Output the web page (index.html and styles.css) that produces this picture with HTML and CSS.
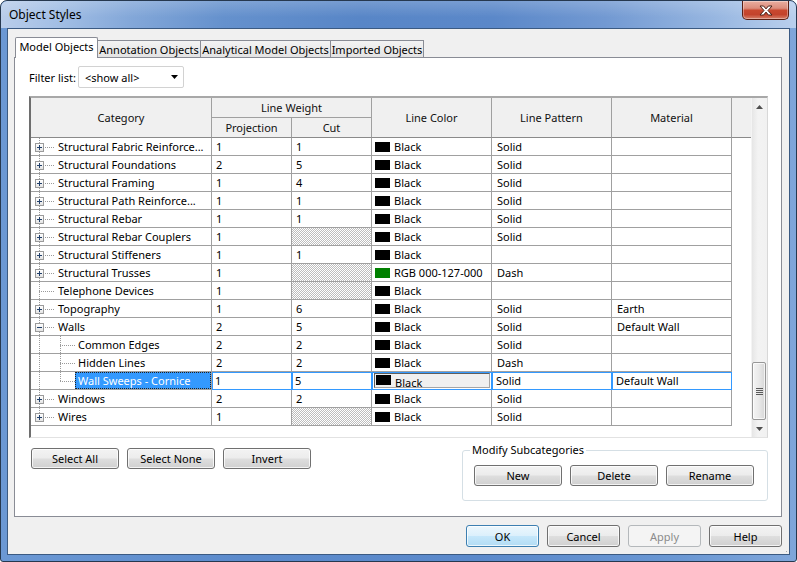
FILE: index.html
```html
<!DOCTYPE html>
<html>
<head>
<meta charset="utf-8">
<title>Object Styles</title>
<link rel="stylesheet" href="styles.css">
</head>
<body>
<div class="window">
  <div class="titlebar">
    <span class="title">Object Styles</span>
    <div class="close">
      <svg width="14" height="11" viewBox="0 0 14 11"><path d="M1 1h3.6L7 3.9 9.4 1H13L9 5.5 13 10H9.4L7 7.1 4.6 10H1l4-4.5z" fill="#fff" stroke="#4a2219" stroke-width="1" stroke-linejoin="round"/></svg>
    </div>
  </div>
  <div class="client">
    <div class="tabs">
      <div class="tab active t1">Model Objects</div>
      <div class="tab t2">Annotation Objects</div>
      <div class="tab t3">Analytical Model Objects</div>
      <div class="tab t4">Imported Objects</div>
    </div>
    <div class="panel">
      <div class="filter">
        <span class="flabel">Filter list:</span>
        <div class="combo"><span>&lt;show all&gt;</span><svg width="7" height="4" viewBox="0 0 7 4"><path d="M0 0h7L3.5 4z" fill="#000"/></svg></div>
      </div>
      <div class="gridwrap">
        <div class="grid">
          <div class="h h-cat">Category</div>
          <div class="h h-lw">Line Weight</div>
          <div class="h h-color">Line Color</div>
          <div class="h h-pat">Line Pattern</div>
          <div class="h h-mat">Material</div>
          <div class="h h-x"></div>
          <div class="h h-proj">Projection</div>
          <div class="h h-cut">Cut</div>

          <div class="c cat"><span class="node"><span class="box plus"></span></span><span class="name">Structural Fabric Reinforce...</span></div>
          <div class="c">1</div><div class="c">1</div>
          <div class="c clr"><span class="sw"></span>Black</div><div class="c pat">Solid</div><div class="c pat"></div><div class="x"></div>

          <div class="c cat"><span class="node"><span class="box plus"></span></span><span class="name">Structural Foundations</span></div>
          <div class="c">2</div><div class="c">5</div>
          <div class="c clr"><span class="sw"></span>Black</div><div class="c pat">Solid</div><div class="c pat"></div><div class="x"></div>

          <div class="c cat"><span class="node"><span class="box plus"></span></span><span class="name">Structural Framing</span></div>
          <div class="c">1</div><div class="c">4</div>
          <div class="c clr"><span class="sw"></span>Black</div><div class="c pat">Solid</div><div class="c pat"></div><div class="x"></div>

          <div class="c cat"><span class="node"><span class="box plus"></span></span><span class="name">Structural Path Reinforce...</span></div>
          <div class="c">1</div><div class="c">1</div>
          <div class="c clr"><span class="sw"></span>Black</div><div class="c pat">Solid</div><div class="c pat"></div><div class="x"></div>

          <div class="c cat"><span class="node"><span class="box plus"></span></span><span class="name">Structural Rebar</span></div>
          <div class="c">1</div><div class="c">1</div>
          <div class="c clr"><span class="sw"></span>Black</div><div class="c pat">Solid</div><div class="c pat"></div><div class="x"></div>

          <div class="c cat"><span class="node"><span class="box plus"></span></span><span class="name">Structural Rebar Couplers</span></div>
          <div class="c">1</div><div class="c hatch"></div>
          <div class="c clr"><span class="sw"></span>Black</div><div class="c pat">Solid</div><div class="c pat"></div><div class="x"></div>

          <div class="c cat"><span class="node"><span class="box plus"></span></span><span class="name">Structural Stiffeners</span></div>
          <div class="c">1</div><div class="c">1</div>
          <div class="c clr"><span class="sw"></span>Black</div><div class="c pat"></div><div class="c pat"></div><div class="x"></div>

          <div class="c cat"><span class="node"><span class="box plus"></span></span><span class="name">Structural Trusses</span></div>
          <div class="c">1</div><div class="c hatch"></div>
          <div class="c clr"><span class="sw green"></span>RGB 000-127-000</div><div class="c pat">Dash</div><div class="c pat"></div><div class="x"></div>

          <div class="c cat"><span class="node"></span><span class="name">Telephone Devices</span></div>
          <div class="c">1</div><div class="c hatch"></div>
          <div class="c clr"><span class="sw"></span>Black</div><div class="c pat"></div><div class="c pat"></div><div class="x"></div>

          <div class="c cat"><span class="node"><span class="box plus"></span></span><span class="name">Topography</span></div>
          <div class="c">1</div><div class="c">6</div>
          <div class="c clr"><span class="sw"></span>Black</div><div class="c pat">Solid</div><div class="c pat">Earth</div><div class="x"></div>

          <div class="c cat"><span class="node"><span class="box minus"></span></span><span class="name">Walls</span></div>
          <div class="c">2</div><div class="c">5</div>
          <div class="c clr"><span class="sw"></span>Black</div><div class="c pat">Solid</div><div class="c pat">Default Wall</div><div class="x"></div>

          <div class="c cat"><span class="pipe"></span><span class="cnode"></span><span class="cname">Common Edges</span></div>
          <div class="c">2</div><div class="c">2</div>
          <div class="c clr"><span class="sw"></span>Black</div><div class="c pat">Solid</div><div class="c pat"></div><div class="x"></div>

          <div class="c cat"><span class="pipe"></span><span class="cnode"></span><span class="cname">Hidden Lines</span></div>
          <div class="c">2</div><div class="c">2</div>
          <div class="c clr"><span class="sw"></span>Black</div><div class="c pat">Dash</div><div class="c pat"></div><div class="x"></div>

          <div class="c cat"><span class="pipe"></span><span class="cnode last"></span><span class="hl">Wall Sweeps - Cornice</span></div>
          <div class="c sel">1</div><div class="c sel">5</div>
          <div class="c sel clrbtn"><div class="cbtn"><span class="sw"></span><span class="cbtxt">Black</span></div></div>
          <div class="c sel pat">Solid</div><div class="c sel pat">Default Wall</div><div class="x"></div>

          <div class="c cat"><span class="node"><span class="box plus"></span></span><span class="name">Windows</span></div>
          <div class="c">2</div><div class="c">2</div>
          <div class="c clr"><span class="sw"></span>Black</div><div class="c pat">Solid</div><div class="c pat"></div><div class="x"></div>

          <div class="c cat"><span class="node last"><span class="box plus"></span></span><span class="name">Wires</span></div>
          <div class="c">1</div><div class="c hatch"></div>
          <div class="c clr"><span class="sw"></span>Black</div><div class="c pat">Solid</div><div class="c pat"></div><div class="x"></div>
        </div>
        <div class="vscroll">
          <div class="arrow"><svg width="7" height="4" viewBox="0 0 7 4"><path d="M3.5 0L7 4H0z" fill="#4f4f4f"/></svg></div>
          <div class="track">
            <div class="thumb"><svg width="7" height="7" viewBox="0 0 7 7"><path d="M0 0.5h7M0 2.5h7M0 4.5h7M0 6.5h7" stroke="#5a5a5a" stroke-width="1"/></svg></div>
          </div>
          <div class="arrow"><svg width="7" height="4" viewBox="0 0 7 4"><path d="M0 0h7L3.5 4z" fill="#4f4f4f"/></svg></div>
        </div>
      </div>
      <div class="below">
        <div class="selbtns">
          <button class="btn">Select All</button>
          <button class="btn">Select None</button>
          <button class="btn">Invert</button>
        </div>
        <div class="group">
          <span class="glabel">Modify Subcategories</span>
          <div class="gbtns">
            <button class="btn">New</button>
            <button class="btn">Delete</button>
            <button class="btn">Rename</button>
          </div>
        </div>
      </div>
    </div>
    <div class="footer">
      <button class="btn fbtn ok">OK</button>
      <button class="btn fbtn">Cancel</button>
      <button class="btn fbtn disabled">Apply</button>
      <button class="btn fbtn">Help</button>
    </div>
  </div>
</div>
</body>
</html>
```
FILE: styles.css
```css
* { box-sizing: border-box; }
html, body { margin: 0; padding: 0; width: 797px; height: 562px; overflow: hidden; background: #fff; }
body {
  font-family: "Noto Sans", "DejaVu Sans", sans-serif;
  font-size: 11px;
  color: #000;
  --v: repeating-linear-gradient(to bottom, #9a9a9a 0 1px, transparent 1px 2px);
  --hz: repeating-linear-gradient(to right, #9a9a9a 0 1px, transparent 1px 2px);
}

.window {
  width: 797px; height: 562px;
  display: flex; flex-direction: column;
  border: 1px solid #26384f;
  border-radius: 7px 7px 3px 3px;
  background: linear-gradient(to right, #6b98d4 0%, #5c8bcc 30%, #5b89cb 60%, #6a97d3 85%, #7fa6da 100%);
  padding: 0 6px 6px 6px;
  overflow: hidden;
}

.titlebar {
  height: 27px;
  margin: 0 -6px;
  padding: 0 7px 0 7px;
  display: flex; justify-content: space-between; align-items: flex-start;
  background:
    linear-gradient(rgba(255,255,255,.18), rgba(255,255,255,0) 60%),
    linear-gradient(to right, #b9cdea 0%, #a3bfe5 7%, #84a8d9 16%, #6591cd 28%, #5886c7 45%, #5b88c9 62%, #7299d2 76%, #98b7e1 90%, #b9cfed 100%);
  border-radius: 6px 6px 0 0;
}
.title { font-size: 12px; line-height: 28px; padding-left: 1px; color: #000; }
.close {
  width: 47px; height: 19px;
  border: 1px solid #5a1f14; border-top: none;
  border-radius: 0 0 5px 5px;
  background: linear-gradient(#eaaea0 0%, #dc8d7c 40%, #c9482f 52%, #c3432c 75%, #d7806a 100%);
  box-shadow: inset 0 0 0 1px rgba(255,255,255,.35);
  display: flex; align-items: center; justify-content: center;
}

.client {
  flex: 1;
  background: #f0f0f0;
  border: 1px solid #3b5a82;
  padding: 8px 7px 6px 6px;
  display: flex; flex-direction: column;
  background-image: radial-gradient(circle, #a9a9a9 0.7px, transparent 0.9px);
  background-size: 3px 3px;
  background-position: right 1px bottom 1px;
  background-repeat: no-repeat;
}

/* tabs */
.tabs { height: 20px; display: flex; align-items: flex-end; padding-left: 1px; position: relative; z-index: 1; }
.tab {
  height: 17px;
  border: 1px solid #898c95; border-bottom: none;
  background: linear-gradient(#f3f3f3, #e3e3e3);
  display: flex; align-items: center; justify-content: center;
  white-space: nowrap;
  margin-left: -1px;
}
.tab.active { height: 21px; margin-bottom: -1px; background: #fff; margin-left: 0; border-radius: 2px 2px 0 0; padding-bottom: 3px; }
.t1 { width: 83px; }
.t2 { width: 104px; }
.t3 { width: 131px; }
.t4 { width: 94px; }

.panel {
  height: 460px;
  background: #fff;
  border: 1px solid #898c95;
  padding: 8px 13px 0 13px;
  display: flex; flex-direction: column;
}

.filter { display: flex; align-items: center; height: 22px; }
.flabel { width: 50px; padding-left: 1px; }
.combo {
  width: 106px; height: 22px;
  border: 1px solid #d2d2d2; border-radius: 2px;
  display: flex; align-items: center; justify-content: space-between;
  padding: 0 5px 0 6px;
}

/* grid */
.gridwrap {
  margin-top: 8px; margin-left: 1px;
  width: 739px; height: 342px;
  border-top: 2px solid #a8a8a8;
  border-left: 2px solid #6e6e6e;
  border-right: 1px solid #d8d8d8;
  border-bottom: 1px solid #e2e2e2;
  display: flex;
  background: #fff;
}
.grid {
  width: 720px;
  display: grid;
  grid-template-columns: 181px 80px 80px 120px 120px 120px 19px;
  grid-template-rows: 20px 20px repeat(16, 18px);
  align-content: start;
}
.h {
  background: #f0f0f0;
  border-right: 1px solid #a0a0a0;
  border-bottom: 1px solid #a0a0a0;
  display: flex; align-items: center; justify-content: center;
  color: #111;
}
.h-cat { grid-row: 1 / 3; grid-column: 1; border-bottom-color: #8a8a8a; }
.h-lw { grid-row: 1; grid-column: 2 / 4; }
.h-color { grid-row: 1 / 3; grid-column: 4; border-bottom-color: #8a8a8a; }
.h-pat { grid-row: 1 / 3; grid-column: 5; border-bottom-color: #8a8a8a; }
.h-mat { grid-row: 1 / 3; grid-column: 6; border-bottom-color: #8a8a8a; }
.h-x { grid-row: 1 / 3; grid-column: 7; border-right: none; border-bottom-color: #8a8a8a; }
.h-proj { grid-row: 2; grid-column: 2; border-bottom-color: #8a8a8a; }
.h-cut { grid-row: 2; grid-column: 3; border-bottom-color: #8a8a8a; }

.c {
  border-right: 1px solid #a0a0a0;
  border-bottom: 1px solid #a0a0a0;
  display: flex; align-items: center;
  padding-left: 4px;
  white-space: nowrap; overflow: hidden;
}
.c.pat { padding-left: 5px; }
.c.clr { padding-left: 3px; }
.hatch { background: repeating-conic-gradient(#bdbdbd 0% 25%, #ffffff 0% 50%) 0 0 / 2px 2px; }
.sw { width: 15px; height: 10px; background: #000; margin-right: 4px; flex: none; }
.sw.green { background: #008000; }

.c.cat { padding-left: 0; align-items: stretch; }
.node {
  width: 23px; flex: none;
  padding: 5px 0 0 4px;
  background:
    var(--v) 8px 0 / 1px 100% no-repeat,
    var(--hz) 8px 9px / 15px 1px no-repeat;
}
.node.last {
  background:
    var(--v) 8px 0 / 1px 10px no-repeat,
    var(--hz) 8px 9px / 15px 1px no-repeat;
}
.box {
  display: block;
  width: 9px; height: 9px;
  border: 1px solid #9b9b9b;
}
.box.plus {
  background:
    linear-gradient(#21406b, #21406b) 1px 3px / 5px 1px no-repeat,
    linear-gradient(#21406b, #21406b) 3px 1px / 1px 5px no-repeat,
    linear-gradient(#ffffff, #e4e4e4);
}
.box.minus {
  background:
    linear-gradient(#21406b, #21406b) 1px 3px / 5px 1px no-repeat,
    linear-gradient(#ffffff, #e4e4e4);
}
.name { align-self: center; padding-left: 4px; }
.pipe { width: 23px; flex: none; background: var(--v) 8px 0 / 1px 100% no-repeat; }
.cnode {
  width: 21px; flex: none;
  background:
    var(--v) 6px 0 / 1px 100% no-repeat,
    var(--hz) 6px 9px / 15px 1px no-repeat;
}
.cnode.last {
  background:
    var(--v) 6px 0 / 1px 10px no-repeat,
    var(--hz) 6px 9px / 15px 1px no-repeat;
}
.cname { align-self: center; padding-left: 3px; }
.hl {
  flex: 1;
  background: #3399ff; color: #fff;
  padding-left: 3px;
  display: flex; align-items: center;
  outline: 1px dotted #222; outline-offset: -1px;
}

.c.sel {
  border-right-color: #3399ff;
  border-bottom-color: #3399ff;
  box-shadow: inset 1px 1px 0 #3399ff;
  padding-left: 3px;
}
.c.sel.pat { padding-left: 4px; }
.c.clrbtn { padding: 1px 1px 1px 2px; align-items: stretch; }
.cbtn {
  flex: 1;
  border: 1px solid; border-color: #5e5e5e #a5a5a5 #a5a5a5 #5e5e5e;
  background: #f0f0f0;
  display: flex; align-items: flex-start;
  padding: 1px 0 0 1px;
}
.cbtxt { line-height: 14px; padding-top: 1px; }

/* scrollbar */
.vscroll {
  width: 16px;
  display: flex; flex-direction: column;
  background: linear-gradient(to right, #e6e6e6, #f3f3f3 40%, #f1f1f1);
  border-left: 1px solid #f4f4f4;
}
.arrow { height: 17px; display: flex; align-items: center; justify-content: center; }
.track { flex: 1; display: flex; flex-direction: column; justify-content: flex-end; }
.thumb {
  height: 58px; margin: 0 1px 0 0;
  border: 1px solid #979797; border-radius: 2px;
  background: linear-gradient(to right, #f4f4f4, #e9e9e9 50%, #d6d6d6);
  box-shadow: inset 0 0 0 1px rgba(255,255,255,.7);
  display: flex; align-items: center; justify-content: center;
}

/* below buttons */
.below { display: flex; align-items: flex-start; margin-top: 10px; }
.selbtns { display: flex; gap: 8px; margin-left: 3px; }
.btn {
  font: inherit; color: #000;
  width: 88px; height: 21px;
  border: 1px solid #707070; border-radius: 3px;
  background: linear-gradient(#f3f3f3 0%, #ececec 48%, #dedede 52%, #d0d0d0 100%);
  box-shadow: inset 0 0 0 1px rgba(255,255,255,.75);
  padding: 0;
}
.group {
  margin-left: auto; margin-right: 0;
  margin-top: 2px;
  width: 306px; height: 51px;
  border: 1px solid #d5dfe5; border-radius: 3px;
  padding-left: 11px;
  display: flex; flex-direction: column; align-items: flex-start;
}
.glabel { margin-top: -9px; margin-left: -4px; padding: 0 2px; background: #fff; line-height: 16px; }
.gbtns { display: flex; gap: 8px; margin-top: 7px; }

.footer { display: flex; justify-content: flex-end; gap: 8px; margin-top: 8px; }
.fbtn { width: 73px; height: 22px; }
.ok {
  border-color: #3c7fb1;
  background: linear-gradient(#ecf7fd 0%, #dcf0fc 48%, #c5e7fb 52%, #b2dcf4 100%);
}
.disabled { border-color: #b4b8bb; background: #f4f4f4; color: #8b8b8b; box-shadow: none; }
```
